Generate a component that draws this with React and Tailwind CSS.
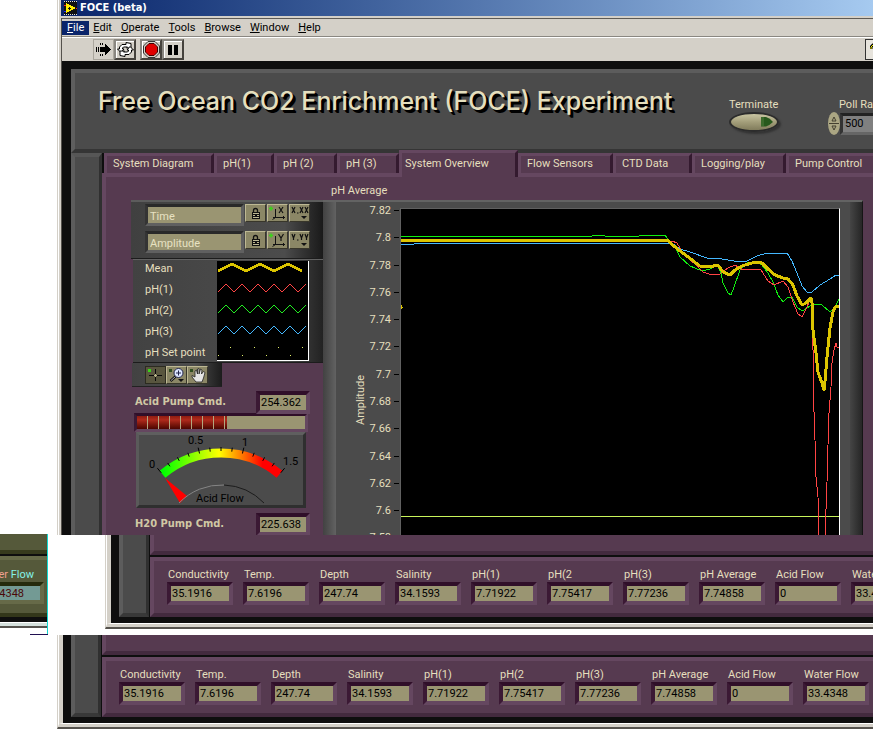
import React, { useState } from 'react';

const tabs = [
  { name: 'System Diagram', width: 'w-[110px]' },
  { name: 'pH(1)', width: 'w-[60px]' },
  { name: 'pH (2)', width: 'w-[63px]' },
  { name: 'pH (3)', width: 'w-[62px]' },
  { name: 'System Overview', width: 'w-[119px]' },
  { name: 'Flow Sensors', width: 'w-[95px]' },
  { name: 'CTD Data', width: 'w-[79px]' },
  { name: 'Logging/play', width: 'w-[94px]' },
  { name: 'Pump Control', width: 'w-[110px]' },
];

const readings = [
  ['Conductivity', '35.1916'],
  ['Temp.', '7.6196'],
  ['Depth', '247.74'],
  ['Salinity', '34.1593'],
  ['pH(1)', '7.71922'],
  ['pH(2', '7.75417'],
  ['pH(3)', '7.77236'],
  ['pH Average', '7.74858'],
  ['Acid Flow', '0'],
  ['Water Flow', '33.4348'],
];

const axisTicks = [
  ['7.82', 9], ['7.8', 36], ['7.78', 64], ['7.76', 91], ['7.74', 118], ['7.72', 145],
  ['7.7', 173], ['7.68', 200], ['7.66', 227], ['7.64', 255], ['7.62', 282], ['7.6', 309], ['7.58', 336],
];

const meanLine = '0,31 112,31 120,32 124,31 266,31 274,38 282,44 291,51 299,57 308,58 317,56 322,63 329,66 334,61 341,57 354,53 361,54 367,60 374,66 382,69 387,70 392,76 396,87 401,96 405,94 410,89 411,94 412,121 415,144 417,163 421,174 423,181 424,172 426,148 429,119 432,103 434,98 438,97';
const ph1Line = '0,32 266,32 271,32 276,34 282,44 296,57 302,63 311,66 319,65 327,59 334,56 342,61 352,60 360,61 367,72 373,76 382,72 387,78 392,93 397,105 401,108 406,98 410,88 411,114 412,141 412,171 413,203 414,231 415,268 417,288 418,326';
const ph1Rise = '424,326 425,301 426,273 427,236 428,204 430,178 431,154 433,141 435,134 436,138 438,138';
const ph2Line = '0,27 191,27 192,26 203,26 204,27 238,27 239,26 264,26 269,33 274,38 279,48 289,57 301,62 309,60 316,55 320,64 322,74 327,84 330,86 333,78 339,61 346,54 354,53 361,56 367,64 372,73 377,86 382,93 387,88 391,88 396,98 401,102 406,99 412,95 421,96 429,103 434,98 438,90';
const ph3Line = '0,35 13,35 14,34 271,34 279,40 289,43 306,49 321,50 339,53 346,52 356,47 366,44 386,44 391,52 396,64 401,77 406,83 411,83 419,76 429,70 435,66 438,66';

// triangle wave used by the plot legend samples
const zigzag = (start, low, high, step) => {
  const pts = [];
  for (let i = 0, x = start; x <= 92; i++, x += step) {
    pts.push(`${x},${i % 2 ? high : low}`);
  }
  return pts.join(' ');
};

function Field({ id, value, label, className }) {
  return (
    <input
      id={id}
      aria-label={label}
      readOnly
      value={value}
      className={`block h-[23px] border-4 border-t-[#300f29] border-l-[#3b1934] border-r-[#654760] border-b-[#654760] bg-[#9a9572] px-[1px] text-black outline-none ${className}`}
    />
  );
}

function ToolButton({ label, children }) {
  return (
    <button
      type="button"
      aria-label={label}
      className="flex h-[21px] w-[22px] items-center justify-center border-2 border-t-[#8a8781] border-l-[#8a8781] border-r-[#45423d] border-b-[#45423d] bg-[#d4d0c8] shadow-[inset_1px_1px_0_#fff]"
    >
      {children}
    </button>
  );
}

function ScaleButton({ label, children, pressed }) {
  return (
    <button
      type="button"
      aria-label={label}
      className={`h-[18px] w-[21px] border ${
        pressed
          ? 'border-[#2c2b20] bg-[#59563f]'
          : 'border-t-[#bdb893] border-l-[#bdb893] border-r-[#38362a] border-b-[#38362a] bg-[#8b8766]'
      }`}
    >
      <svg viewBox="0 0 19 16" className="block h-[16px] w-[19px]">
        {children}
      </svg>
    </button>
  );
}

function LockIcon() {
  return (
    <g>
      <path d="M7.500 8V5.500Q7.500 3.500 9.500 3.500T11.500 5.500V8" fill="none" stroke="#111" strokeWidth="1.300" />
      <rect x="6" y="7" width="8" height="7" fill="#111" />
      <path d="M7 8.500h6M7 10.500h2M11 10.500h2M7 12.500h6" stroke="#bdb893" />
      <rect x="9" y="9" width="2" height="3" fill="#111" />
    </g>
  );
}

function AutoScaleIcon({ axis }) {
  return (
    <g>
      <path d="M1 3.500h4M3 1.500v4" stroke="#39d419" strokeWidth="1.500" />
      <path d="M7.500 4v8M5 12.500h12M15.500 11v3M4.500 14.500l3-2" stroke="#111" fill="none" />
      {axis === 'X'
        ? <path d="M11 2l4 6M15 2l-4 6" stroke="#111" strokeWidth="1.200" />
        : <path d="M10.500 2l2.500 4l2.500-4M13 6v3" stroke="#111" strokeWidth="1.200" fill="none" />}
    </g>
  );
}

function FormatIcon({ axis }) {
  const shape = axis === 'X' ? 'M0 0l3 6M3 0l-3 6' : 'M0 0l1.500 4l1.500-4M1.500 4v2';
  return (
    <g fill="none" stroke="#111" strokeWidth="1.200">
      <path d={shape} transform="translate(2 2)" />
      <path d={shape} transform="translate(10 2)" />
      <path d={shape} transform="translate(15 2)" />
      <path d="M7 8h1.500" />
      <path d="M11 11h6l-3 3z" fill="#111" stroke="none" />
    </g>
  );
}

function ScaleRow({ name, axis }) {
  return (
    <div className="flex h-[27px] items-start gap-[1px]">
      <input
        aria-label={`${name} scale name`}
        defaultValue={name}
        className="h-[22px] w-[99px] border-[3px] border-t-[#292929] border-l-[#343434] border-r-[#606060] border-b-[#606060] bg-[#9a9572] px-[2px] pt-[2px] text-[#e8e2c2] outline-none"
      />
      <ScaleButton label={`Lock ${name}`}><LockIcon /></ScaleButton>
      <ScaleButton label={`Autoscale ${name}`}><AutoScaleIcon axis={axis} /></ScaleButton>
      <ScaleButton label={`Format ${name}`}><FormatIcon axis={axis} /></ScaleButton>
    </div>
  );
}

function PlotLegend() {
  return (
    <div className="ml-[2px] flex h-[104px] w-[190px] border-t border-b border-t-[#626262] border-b-[#1c1c1c] bg-linear-to-r from-[#424242] via-[#4c4c4c] via-80% to-[#222222] pt-[1px] pl-[12px]">
      <ul className="w-[72px] shrink-0 leading-[21px] whitespace-nowrap">
        <li className="-mt-[3px]">Mean</li>
        <li>pH(1)</li>
        <li>pH(2)</li>
        <li>pH(3)</li>
        <li>pH Set point</li>
      </ul>
      <svg width="92" height="100" className="block shrink-0 border-r border-b border-white bg-black" shapeRendering="crispEdges">
        <g fill="none">
          <polyline points={zigzag(1, 10, 3, 14)} stroke="#dcc400" strokeWidth="3" />
          <polyline points={zigzag(1, 31, 23, 8)} stroke="#ff4444" />
          <polyline points={zigzag(1, 52, 44, 8)} stroke="#22f022" />
          <polyline points={zigzag(1, 73, 65, 8)} stroke="#44b8ff" />
        </g>
        <g fill="#e2f06a">
          {[1, 25, 49, 73].map((x) => <rect key={x} x={x} y="94" width="1" height="1" />)}
          {[13, 37, 61, 85].map((x) => <rect key={x} x={x} y="86" width="1" height="1" />)}
        </g>
      </svg>
    </div>
  );
}

function GraphPalette() {
  return (
    <div className="ml-[1px] flex h-[24px] w-[90px] border-b border-b-[#222222] bg-linear-to-r from-[#424242] via-[#4c4c4c] via-70% to-[#1c1c1c] pt-[3px] pl-[13px]">
      <ScaleButton label="Cursor" pressed>
        <rect x="2" y="2" width="3" height="3" fill="#39d419" />
        <path d="M9.500 2v12M3 8.500h13" stroke="#080808" />
        <path d="M8 8.500h3M9.500 7v3" stroke="#b9b48c" />
      </ScaleButton>
      <ScaleButton label="Zoom">
        <rect x="2" y="2" width="3" height="3" fill="#2e4d20" />
        <path d="M8.500 9.500L3.500 14" stroke="#111" strokeWidth="2.500" />
        <path d="M8 10L4 13.500" stroke="#aaa" />
        <circle cx="11.500" cy="6" r="4.500" fill="#dde6ff" stroke="#22264d" />
        <path d="M9 6h5M11.500 3.500v5" stroke="#22264d" />
        <path d="M11 12h6l-3 3z" fill="#111" />
      </ScaleButton>
      <ScaleButton label="Pan">
        <rect x="2" y="2" width="3" height="3" fill="#2e4d20" />
        <path
          d="M8 15L4 10L4 8.500L7 10V4L8.500 3L9.500 7V2L11 1.500V7L12.500 2L14 3L13.500 7L15.500 4.500L17 5.500L15.500 11L14 15z"
          fill="#e6e6e6"
          stroke="#222"
          strokeWidth="0.800"
        />
      </ScaleButton>
    </div>
  );
}

function FlowGauge() {
  // scale sweeps 80 degrees, centred on straight up
  const marks = Array.from({ length: 13 }, (_, i) => {
    const a = ((-40 + i * 6.667) * Math.PI) / 180;
    const outer = i % 4 === 0 ? 99 : 97;
    return [85 + 93 * Math.sin(a), 112 - 93 * Math.cos(a), 85 + outer * Math.sin(a), 112 - outer * Math.cos(a)];
  });
  return (
    <div className="ml-[5px] h-[76px] w-[170px] border-[3px] border-t-[#5f5f5f] border-l-[#5a5a5a] border-r-[#2f2f2f] border-b-[#2f2f2f] bg-[#4b4b4b]">
      <svg viewBox="3 3 164 70" className="block h-[70px] w-[164px]" fontSize="11">
        <defs>
          <linearGradient id="flow" gradientUnits="userSpaceOnUse" x1="27" y1="0" x2="144" y2="0">
            <stop offset="0" stopColor="#00ff00" />
            <stop offset="0.480" stopColor="#ffff00" />
            <stop offset="0.850" stopColor="#ff0000" />
          </linearGradient>
        </defs>
        <path d="M26.500 42.300A91 91 0 0 1 143.500 42.300" fill="none" stroke="url(#flow)" strokeWidth="9" />
        {marks.map(([x1, y1, x2, y2], i) => (
          <line key={i} x1={x1} y1={y1} x2={x2} y2={y2} stroke="#000" />
        ))}
        <path d="M29 46L44 71L51 64z" fill="#ff0000" />
        <path d="M43 71A59 59 0 0 1 88 53" fill="none" stroke="#858585" />
        <path d="M88 53A59 59 0 0 1 128 71" fill="none" stroke="#1c1c1c" />
        <text x="13" y="36">0</text>
        <text x="52" y="12">0.5</text>
        <text x="106" y="14">1</text>
        <text x="147" y="33">1.5</text>
        <text x="60" y="70">Acid Flow</text>
      </svg>
    </div>
  );
}

function PumpRow({ id, label, value }) {
  return (
    <div className="flex h-[22px] items-center pl-[4px]">
      <label htmlFor={id} className="w-[121px] font-['DejaVu_Sans_Condensed','DejaVu_Sans',sans-serif] font-bold text-[#d0c8a4]">
        {label}
      </label>
      <Field id={id} value={value} className="w-[54px]" />
    </div>
  );
}

function ControlColumn() {
  return (
    <div className="mt-[23px] w-[192px] shrink-0">
      <div className="h-[59px] border-t-2 border-b border-t-[#5c5c5c] border-b-[#1c1c1c] bg-linear-to-r from-[#404040] via-[#4c4c4c] via-80% to-[#1a1a1a] pt-[2px] pl-[14px]">
        <ScaleRow name="Time" axis="X" />
        <ScaleRow name="Amplitude" axis="Y" />
      </div>
      <PlotLegend />
      <GraphPalette />
      <div className="mt-[4px]">
        <PumpRow id="acid-pump" label="Acid Pump Cmd." value="254.362" />
        <div
          role="progressbar"
          aria-label="Acid pump level"
          aria-valuenow={54}
          className="ml-[3px] h-[19px] w-[174px] border-[3px] border-t-[#300f29] border-l-[#3b1934] border-r-[#654760] border-b-[#654760] bg-[#9a9572]"
        >
          <div className="flex h-full w-[90px] overflow-hidden bg-linear-to-b from-[#8e1c10] via-[#b02a1c] via-30% to-[#4c0602]">
            {[0, 1, 2, 3, 4, 5, 6, 7].map((n) => (
              <span key={n} className="h-full w-[11px] shrink-0 border-r border-[#b3a780]" />
            ))}
          </div>
        </div>
        <FlowGauge />
        <div className="mt-[5px]">
          <PumpRow id="water-pump" label="H20 Pump Cmd." value="225.638" />
        </div>
      </div>
    </div>
  );
}

function Chart() {
  return (
    <div className="mr-[10px] min-w-0 flex-1">
      <h2 className="h-[23px] pt-[6px] pl-[8px] leading-[16px]">pH Average</h2>
      <div className="flex h-[335px] border-t-2 border-r border-t-[#636363] border-r-[#151515] bg-[#4b4b4b]">
        <div className="w-[13px] shrink-0 bg-linear-to-r from-[#424242] to-[#626262]" />
        <svg width="64" height="333" className="block shrink-0" fontSize="11" fill="#e5dfbe">
          {axisTicks.map(([text, y]) => (
            <g key={text}>
              <text x="55" y={y + 3} textAnchor="end">{text}</text>
              <rect x="58" y={y - 1} width="5" height="1" fill="#000" />
            </g>
          ))}
          <text textAnchor="middle" transform="translate(28 198) rotate(-90)">Amplitude</text>
        </svg>
        <svg
          viewBox="0 0 438 326"
          preserveAspectRatio="none"
          className="mt-[6px] block h-[327px] min-w-0 flex-1 border-t border-l border-r border-t-[#606060] border-l-[#606060] border-r-white bg-black"
        >
          <g fill="none" shapeRendering="crispEdges">
            <line x1="0" y1="307.500" x2="438" y2="307.500" stroke="#c8f45a" />
            <polyline points={ph3Line} stroke="#44b8ff" />
            <polyline points={ph2Line} stroke="#10f010" />
            <polyline points={ph1Line} stroke="#ff4444" />
            <polyline points={ph1Rise} stroke="#ff4444" />
            <polyline points={meanLine} stroke="#dcc400" strokeWidth="3" strokeLinejoin="round" />
            <path d="M0 98h2M0.500 96v4" stroke="#dcc400" />
          </g>
        </svg>
        <div className="w-[10px] shrink-0" />
        <div className="w-[12px] shrink-0 bg-linear-to-r from-[#454545] to-[#262626]" />
      </div>
    </div>
  );
}

function MenuBar() {
  return (
    <nav className="flex h-[19px] items-center border-t border-b border-t-[#5d5a55] border-b-[#8a8781] pt-[1px] text-black">
      {['File', 'Edit', 'Operate', 'Tools', 'Browse', 'Window', 'Help'].map((item, i) => (
        <button
          key={item}
          type="button"
          className={`h-[14px] leading-[14px] ${i === 0 ? 'bg-[#0a246a] px-[5px] text-white' : 'pr-[5px] pl-[4px]'}`}
        >
          <span className="underline">{item[0]}</span>{item.slice(1)}
        </button>
      ))}
    </nav>
  );
}

function ToolBar() {
  return (
    <div className="flex h-[24px] items-center border-t border-white pl-[31px]">
      <button type="button" aria-label="Run" className="flex h-[21px] w-[21px] items-center justify-center border border-[#aaa69d]">
        <svg width="17" height="15" viewBox="0 0 17 15" shapeRendering="crispEdges">
          <path d="M1.500 5v5M3.500 5v5M5.500 1v2M7.500 1v2M5.500 12v2M7.500 12v2" stroke="#000" />
          <path d="M5 5h5V2l6 5.500l-6 5.500v-3H5z" fill="#000" />
        </svg>
      </button>
      <ToolButton label="Run continuously">
        <svg width="17" height="15" viewBox="0 0 17 15" fill="#fff" stroke="#000">
          <path d="M2.500 7V5L5 2.500h4V.5l5 1v4.500H9.500L10.500 5H6.500L5.500 6v1h1.500L4 10.500L.5 7z" />
          <path d="M14.500 8v2L12 12.500H8v2l-5-1V9h4.500L6.500 10h4L11.500 9V8H10l3-3.500L16.500 8z" />
        </svg>
      </ToolButton>
      <div className="ml-[4px] flex">
        <ToolButton label="Abort">
          <svg width="17" height="17" viewBox="0 0 17 17">
            <path d="M5 .5h7L16.500 5v7L12 16.500H5L.5 12V5z" fill="#d4d0c8" stroke="#333" />
            <path d="M6 2.500h5L14.500 6v5L11 14.500H6L2.500 11V6z" fill="#e00000" stroke="#400" />
          </svg>
        </ToolButton>
        <ToolButton label="Pause">
          <svg width="12" height="12">
            <rect x="1" y="1" width="4" height="10" />
            <rect x="7" y="1" width="4" height="10" />
          </svg>
        </ToolButton>
      </div>
      <button
        type="button"
        aria-label="Context help"
        className="-mr-[14px] ml-auto flex h-[21px] w-[22px] shrink-0 items-center border border-[#333] bg-[#e6e3dc] pl-[4px]"
      >
        <svg width="12" height="14" fill="none">
          <path d="M1 6V4L3 2h4l2 2v2L5 9v4" stroke="#000" strokeWidth="3" />
          <path d="M1 6V4L3 2h4l2 2v2L5 9v4" stroke="#f4f000" />
        </svg>
      </button>
    </div>
  );
}

function Header() {
  return (
    <header className="flex h-[84px] overflow-hidden border-t-4 border-b-4 border-l-4 border-t-[#5c5c5c] border-b-[#353535] border-l-[#5e5e5e] bg-[#4b4b4b]">
      <h1 className="w-[631px] shrink-0 pt-[12px] pl-[23px] font-['Inter',sans-serif] text-[25px] leading-[32px] font-medium whitespace-nowrap text-[#e5dfbe] [text-shadow:2px_2px_0_#000,3px_3px_0_#000]">
        Free Ocean CO2 Enrichment (FOCE) Experiment
      </h1>
      <div className="w-[96px] shrink-0 pt-[24px]">
        <label htmlFor="terminate" className="block pl-[23px] leading-[15px]">Terminate</label>
        <button
          id="terminate"
          type="button"
          aria-label="Terminate"
          className="ml-[23px] flex h-[20px] w-[50px] items-center justify-end rounded-[50%] border-2 border-[#2c2c2c] bg-linear-to-b from-[#c9c5a2] via-[#a39e7a] to-[#817c5c] pr-[3px] shadow-[2px_2px_2px_#333]"
        >
          <svg width="14" height="10">
            <path d="M1 0h5q4 1 7 5q-3 3-7 4.500H1z" fill="#28591d" />
            <path d="M1 0h3v9H1z" fill="#3c6b2c" />
          </svg>
        </button>
      </div>
      <div className="shrink-0 pt-[24px]">
        <label htmlFor="poll" className="block pl-[37px] leading-[15px]">Poll Rate</label>
        <div className="flex items-center pl-[26px]">
          <button type="button" aria-label="Change poll rate" className="h-[23px] w-[12px] rounded-[50%] bg-[#aba683]">
            <svg width="12" height="23" fill="none" stroke="#444030">
              <path d="M4 9l2-4l2 4zM4 14l2 4l2-4zM1 11.500h10" />
            </svg>
          </button>
          <input
            id="poll"
            defaultValue="500"
            className="h-[22px] w-[60px] border-[3px] border-t-[#222] border-l-[#333] border-r-[#666] border-b-[#666] bg-[#808080] px-[2px] text-black outline-none"
          />
        </div>
      </div>
    </header>
  );
}

function MainWindow() {
  const [active, setActive] = useState('System Overview');
  return (
    <section className="ml-[57px] overflow-hidden border-l border-[#d4d0c8]">
      <div className="border-l border-white">
        <div className="border-l-2 border-[#d4d0c8] bg-[#d4d0c8]">
          <div className="flex h-[16px] items-center gap-[3px] bg-linear-to-r from-[#0a246a] to-[#a6caf0] pl-[3px] font-['DejaVu_Sans_Condensed','DejaVu_Sans',sans-serif] leading-[14px] font-bold text-white">
            <svg width="13" height="14" shapeRendering="crispEdges">
              <rect width="13" height="14" fill="#111" />
              <path d="M0 .5h13M0 13.500h13" stroke="#ddd" strokeDasharray="1 1" />
              <path d="M2 2l10 5l-10 5z" fill="#ffef00" />
              <path d="M4 7.500h3M5.500 6v3" stroke="#111" />
              <path d="M0 4h2M12 7h1" stroke="#f22" />
              <path d="M0 10h2" stroke="#22f" />
            </svg>
            <span>FOCE (beta)</span>
          </div>
          <div className="mt-[2px] border-l border-[#55524d] bg-[#d4d0c8]">
            <MenuBar />
            <ToolBar />
            <div className="bg-[#0e0e0e] pt-[8px] pl-[9px]">
              <Header />
              <div className="flex">
                <div className="w-[31px] shrink-0 border-t-4 border-r-[3px] border-l-4 border-t-[#565656] border-r-[#303030] border-l-[#5c5c5c] bg-[#4b4b4b]" />
                <div className="min-w-0 flex-1">
                  <div role="tablist" className="flex h-[20px] items-end pl-[2px] whitespace-nowrap">
                    {tabs.map((tab) => (
                      <button
                        key={tab.name}
                        type="button"
                        role="tab"
                        aria-selected={tab.name === active}
                        onClick={() => setActive(tab.name)}
                        className={`shrink-0 border-t-[3px] border-r-[3px] border-l-[3px] border-t-[#654760] border-r-[#341a2f] border-l-[#654760] bg-[#563a50] text-left leading-[14px] ${tab.width} ${
                          tab.name === active ? 'relative -mb-[4px] h-[27px] pb-[3px] pl-[3px]' : 'h-[20px] pb-[2px] pl-[6px]'
                        }`}
                      >
                        {tab.name}
                      </button>
                    ))}
                  </div>
                  <div className="flex h-[362px] overflow-hidden border-t-4 border-l-4 border-[#654760] bg-[#563a50] pl-[25px]">
                    <ControlColumn />
                    <Chart />
                  </div>
                </div>
              </div>
            </div>
          </div>
        </div>
      </div>
    </section>
  );
}

// lower edge of a window with the row of sensor readings
function ReadingsWindow({ id, className }) {
  return (
    <section className={`min-w-0 overflow-hidden border-b-2 border-l border-b-[#55524d] border-l-[#d4d0c8] ${className}`}>
      <div className="border-b-[3px] border-l border-b-[#d4d0c8] border-l-white">
        <div className="border-b border-l-4 border-b-white border-l-[#d4d0c8]">
          <div className="flex bg-[#0e0e0e] pb-[6px] pl-[8px]">
            <div className="w-[30px] shrink-0 border-r-[3px] border-b-4 border-l-4 border-r-[#303030] border-b-[#383838] border-l-[#5c5c5c] bg-[#4b4b4b]" />
            <div className="min-w-0 flex-1 pl-[1px]">
              <div className="mb-[2px] h-[20px] border-b-4 border-l-4 border-b-[#432a3e] border-l-[#654760] bg-[#563a50]" />
              <div className="flex h-[60px] gap-[10px] border-t-4 border-b-4 border-l-4 border-t-[#654760] border-b-[#432a3e] border-l-[#654760] bg-[#563a50] pt-[6px] pl-[13px]">
                {readings.map(([name, value]) => (
                  <div key={name} className="w-[66px] shrink-0">
                    <label htmlFor={`${id}-${name}`} className="block pl-[1px] leading-[15px] whitespace-nowrap">{name}</label>
                    <Field id={`${id}-${name}`} value={value} className="w-[66px]" />
                  </div>
                ))}
              </div>
            </div>
          </div>
        </div>
      </div>
    </section>
  );
}

// leftover sliver of the same window with inverted colours
function GreenSliver() {
  return (
    <div className="-mt-[1px] flex w-[48px] shrink-0 flex-col overflow-hidden">
      <div className="border-r border-[#12d8d0]">
        <div className="h-[20px] border-b-4 border-[#363a1c] bg-[#55593a]" />
        <div className="h-[2px] bg-[#0e0e0e]" />
        <div className="h-[61px] border-t-4 border-b-4 border-t-[#666a48] border-b-[#33371a] bg-[#55593a] pt-[7px]">
          <div className="flex w-[34px] justify-end leading-[15px] whitespace-nowrap text-[#84f2e8]">
            <span className="text-[#f0a090]">Wat</span>
            <span className="text-[#f0a090]">er</span>&nbsp;Flow
          </div>
          <div className="flex h-[22px] w-[44px] justify-end border-t-4 border-r-4 border-b-4 border-t-[#252a0c] border-r-[#666a48] border-b-[#666a48] bg-[#739a94] pr-[16px] leading-[15px] text-[#4a0808]">
            33.4348
          </div>
        </div>
        <div className="h-[5px] bg-[#0e0e0e]" />
        <div className="h-[6px] border-t border-b-2 border-t-white border-b-[#55524d] bg-[#d4e0dc]" />
      </div>
      <div className="h-[6px] border-r border-[#12d8d0]" />
      <div className="ml-[30px] h-[1px] bg-[#201050]" />
    </div>
  );
}

function App() {
  return (
    <main className="min-h-screen overflow-hidden bg-white font-['Roboto',sans-serif] text-[11px] text-[#e5dfbe]">
      <MainWindow />
      <div className="flex h-[100px] items-start">
        <GreenSliver />
        <ReadingsWindow id="middle" className="ml-[57px] flex-1" />
      </div>
      <ReadingsWindow id="bottom" className="ml-[57px]" />
    </main>
  );
}

export default App;
